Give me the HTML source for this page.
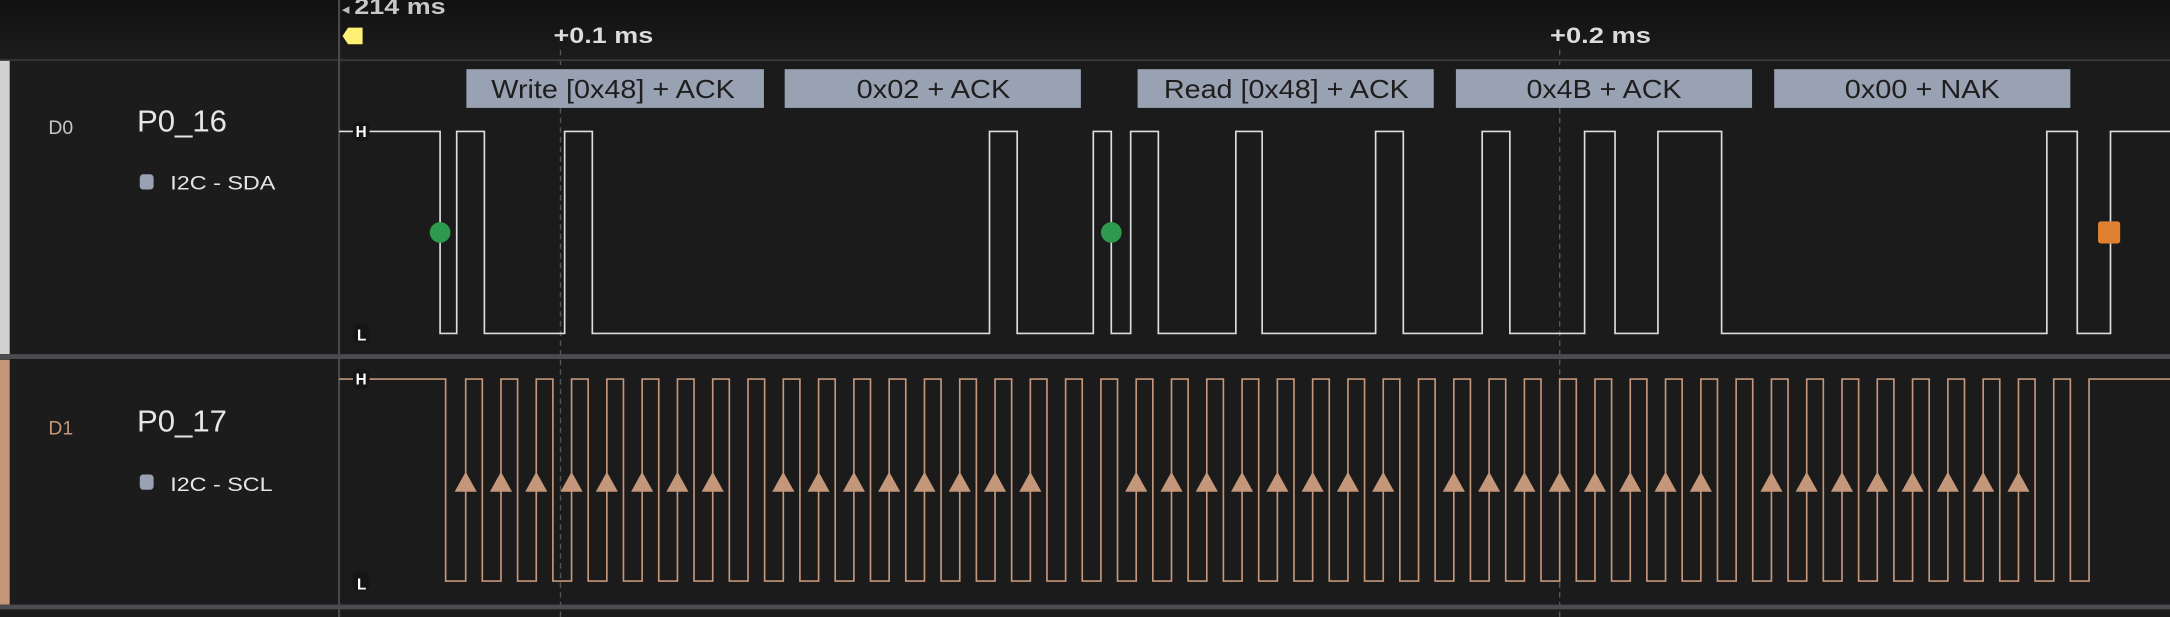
<!DOCTYPE html>
<html><head><meta charset="utf-8"><style>
html,body{margin:0;padding:0;background:#1b1b1b;width:2170px;height:617px;overflow:hidden}
svg{display:block}
text{font-family:"Liberation Sans",sans-serif}
</style></head><body>
<svg width="2170" height="617" viewBox="0 0 1568 446" preserveAspectRatio="none" xmlns="http://www.w3.org/2000/svg">
<defs><linearGradient id="hg" x1="0" y1="0" x2="0" y2="1"><stop offset="0" stop-color="#111"/><stop offset="1" stop-color="#1c1c1c"/></linearGradient></defs>
<rect x="0" y="0" width="1568" height="446" fill="#1b1b1b"/>
<rect x="0" y="0" width="1568" height="43" fill="url(#hg)"/>
<line x1="405" y1="36" x2="405" y2="446" stroke="#555" stroke-width="1" stroke-dasharray="4,3"/>
<line x1="1127" y1="36" x2="1127" y2="446" stroke="#555" stroke-width="1" stroke-dasharray="4,3"/>
<line x1="0" y1="43.5" x2="1568" y2="43.5" stroke="#3a3a3c" stroke-width="1.3"/>
<text x="247" y="10" font-size="11" fill="#bbb">◂</text>
<text x="256" y="10" font-size="16" font-weight="bold" fill="#c8c8c8" textLength="66" lengthAdjust="spacingAndGlyphs">214 ms</text>
<polygon points="247.5,26 251.5,20 262,20 262,32 251.5,32" fill="#fff176"/>
<text x="400" y="31" font-size="16" font-weight="bold" fill="#dcdcdc" textLength="72" lengthAdjust="spacingAndGlyphs">+0.1 ms</text>
<text x="1120" y="31" font-size="16" font-weight="bold" fill="#dcdcdc" textLength="73" lengthAdjust="spacingAndGlyphs">+0.2 ms</text>
<rect x="0" y="44" width="245" height="212" fill="#1c1c1c"/>
<rect x="0" y="260" width="245" height="177" fill="#1c1c1c"/>
<rect x="0" y="44" width="7" height="212" fill="#d2d2d2"/>
<rect x="0" y="260" width="7" height="177" fill="#c4967a"/>
<text x="35" y="97" font-size="14" fill="#c8c8c8">D0</text>
<text x="99" y="95" font-size="22" fill="#e6e6e6" textLength="65" lengthAdjust="spacingAndGlyphs">P0_16</text>
<rect x="101" y="126" width="10" height="11" rx="2.5" fill="#98a2b3"/>
<text x="123" y="137" font-size="14" fill="#e6e6e6" textLength="76" lengthAdjust="spacingAndGlyphs">I2C - SDA</text>
<text x="35" y="314" font-size="14" fill="#c4967a">D1</text>
<text x="99" y="312" font-size="22" fill="#e6e6e6" textLength="65" lengthAdjust="spacingAndGlyphs">P0_17</text>
<rect x="101" y="343" width="10" height="11" rx="2.5" fill="#98a2b3"/>
<text x="123" y="355" font-size="14" fill="#e6e6e6" textLength="74" lengthAdjust="spacingAndGlyphs">I2C - SCL</text>
<line x1="245" y1="0" x2="245" y2="446" stroke="#4a4a4e" stroke-width="1.5"/>
<rect x="0" y="256" width="1568" height="3.5" fill="#4b4b50"/>
<rect x="0" y="437" width="1568" height="3.5" fill="#4b4b50"/>
<g font-size="19" fill="#1e1e1e">
<rect x="337" y="50" width="215" height="28" fill="#98a2b3"/><text x="355" y="71" textLength="176" lengthAdjust="spacingAndGlyphs">Write [0x48] + ACK</text>
<rect x="567" y="50" width="214" height="28" fill="#98a2b3"/><text x="619" y="71" textLength="111" lengthAdjust="spacingAndGlyphs">0x02 + ACK</text>
<rect x="822" y="50" width="214" height="28" fill="#98a2b3"/><text x="841" y="71" textLength="177" lengthAdjust="spacingAndGlyphs">Read [0x48] + ACK</text>
<rect x="1052" y="50" width="214" height="28" fill="#98a2b3"/><text x="1103" y="71" textLength="112" lengthAdjust="spacingAndGlyphs">0x4B + ACK</text>
<rect x="1282" y="50" width="214" height="28" fill="#98a2b3"/><text x="1333" y="71" textLength="112" lengthAdjust="spacingAndGlyphs">0x00 + NAK</text>
</g>
<path d="M245,95 H318 V241 H330 V95 H350 V241 H408 V95 H428 V241 H715 V95 H735 V241 H790 V95 H803 V241 H817 V95 H837 V241 H893 V95 H912 V241 H994 V95 H1014 V241 H1071 V95 H1091 V241 H1145 V95 H1167 V241 H1198 V95 H1244 V241 H1479 V95 H1501 V241 H1525 V95 H1568" fill="none" stroke="#dedede" stroke-width="1.2"/>
<circle cx="318" cy="168" r="7.5" fill="#2e9a4e"/>
<circle cx="803" cy="168" r="7.5" fill="#2e9a4e"/>
<rect x="1516" y="160" width="16" height="16" rx="2" fill="#e08030"/>
<path d="M245,274 H322 V420 H336.5 V274 H348.5 V420 H362 V274 H374 V420 H387.5 V274 H399.5 V420 H413 V274 H425 V420 H438.5 V274 H450.5 V420 H464 V274 H476 V420 H489.5 V274 H501.5 V420 H515 V274 H527 V420 H540.5 V274 H552.5 V420 H566 V274 H578 V420 H591.5 V274 H603.5 V420 H617 V274 H629 V420 H642.5 V274 H654.5 V420 H668 V274 H680 V420 H693.5 V274 H705.5 V420 H719 V274 H731 V420 H744.5 V274 H756.5 V420 H770 V274 H782 V420 H795.5 V274 H807.5 V420 H821 V274 H833 V420 H846.5 V274 H858.5 V420 H872 V274 H884 V420 H897.5 V274 H909.5 V420 H923 V274 H935 V420 H948.5 V274 H960.5 V420 H974 V274 H986 V420 H999.5 V274 H1011.5 V420 H1025 V274 H1037 V420 H1050.5 V274 H1062.5 V420 H1076 V274 H1088 V420 H1101.5 V274 H1113.5 V420 H1127 V274 H1139 V420 H1152.5 V274 H1164.5 V420 H1178 V274 H1190 V420 H1203.5 V274 H1215.5 V420 H1229 V274 H1241 V420 H1254.5 V274 H1266.5 V420 H1280 V274 H1292 V420 H1305.5 V274 H1317.5 V420 H1331 V274 H1343 V420 H1356.5 V274 H1368.5 V420 H1382 V274 H1394 V420 H1407.5 V274 H1419.5 V420 H1433 V274 H1445 V420 H1458.5 V274 H1470.5 V420 H1484 V274 H1496 V420 H1509.5 V274 H1568" fill="none" stroke="#c4967a" stroke-width="1.2"/>
<g fill="#c4967a">
<polygon points="328.5,355.5 336.5,341 344.5,355.5"/><polygon points="354,355.5 362,341 370,355.5"/><polygon points="379.5,355.5 387.5,341 395.5,355.5"/><polygon points="405,355.5 413,341 421,355.5"/><polygon points="430.5,355.5 438.5,341 446.5,355.5"/><polygon points="456,355.5 464,341 472,355.5"/><polygon points="481.5,355.5 489.5,341 497.5,355.5"/><polygon points="507,355.5 515,341 523,355.5"/>
<polygon points="558,355.5 566,341 574,355.5"/><polygon points="583.5,355.5 591.5,341 599.5,355.5"/><polygon points="609,355.5 617,341 625,355.5"/><polygon points="634.5,355.5 642.5,341 650.5,355.5"/><polygon points="660,355.5 668,341 676,355.5"/><polygon points="685.5,355.5 693.5,341 701.5,355.5"/><polygon points="711,355.5 719,341 727,355.5"/><polygon points="736.5,355.5 744.5,341 752.5,355.5"/>
<polygon points="813,355.5 821,341 829,355.5"/><polygon points="838.5,355.5 846.5,341 854.5,355.5"/><polygon points="864,355.5 872,341 880,355.5"/><polygon points="889.5,355.5 897.5,341 905.5,355.5"/><polygon points="915,355.5 923,341 931,355.5"/><polygon points="940.5,355.5 948.5,341 956.5,355.5"/><polygon points="966,355.5 974,341 982,355.5"/><polygon points="991.5,355.5 999.5,341 1007.5,355.5"/>
<polygon points="1042.5,355.5 1050.5,341 1058.5,355.5"/><polygon points="1068,355.5 1076,341 1084,355.5"/><polygon points="1093.5,355.5 1101.5,341 1109.5,355.5"/><polygon points="1119,355.5 1127,341 1135,355.5"/><polygon points="1144.5,355.5 1152.5,341 1160.5,355.5"/><polygon points="1170,355.5 1178,341 1186,355.5"/><polygon points="1195.5,355.5 1203.5,341 1211.5,355.5"/><polygon points="1221,355.5 1229,341 1237,355.5"/>
<polygon points="1272,355.5 1280,341 1288,355.5"/><polygon points="1297.5,355.5 1305.5,341 1313.5,355.5"/><polygon points="1323,355.5 1331,341 1339,355.5"/><polygon points="1348.5,355.5 1356.5,341 1364.5,355.5"/><polygon points="1374,355.5 1382,341 1390,355.5"/><polygon points="1399.5,355.5 1407.5,341 1415.5,355.5"/><polygon points="1425,355.5 1433,341 1441,355.5"/><polygon points="1450.5,355.5 1458.5,341 1466.5,355.5"/>
</g>
<g font-size="11" font-weight="bold" fill="#fff">
<rect x="255" y="88" width="12" height="14" rx="4" fill="#151515"/><text x="257" y="99">H</text>
<rect x="255" y="234" width="12" height="14" rx="4" fill="#151515"/><text x="258" y="246">L</text>
<rect x="255" y="267" width="12" height="14" rx="4" fill="#151515"/><text x="257" y="278">H</text>
<rect x="255" y="413" width="12" height="14" rx="4" fill="#151515"/><text x="258" y="426">L</text>
</g>
</svg>
</body></html>
